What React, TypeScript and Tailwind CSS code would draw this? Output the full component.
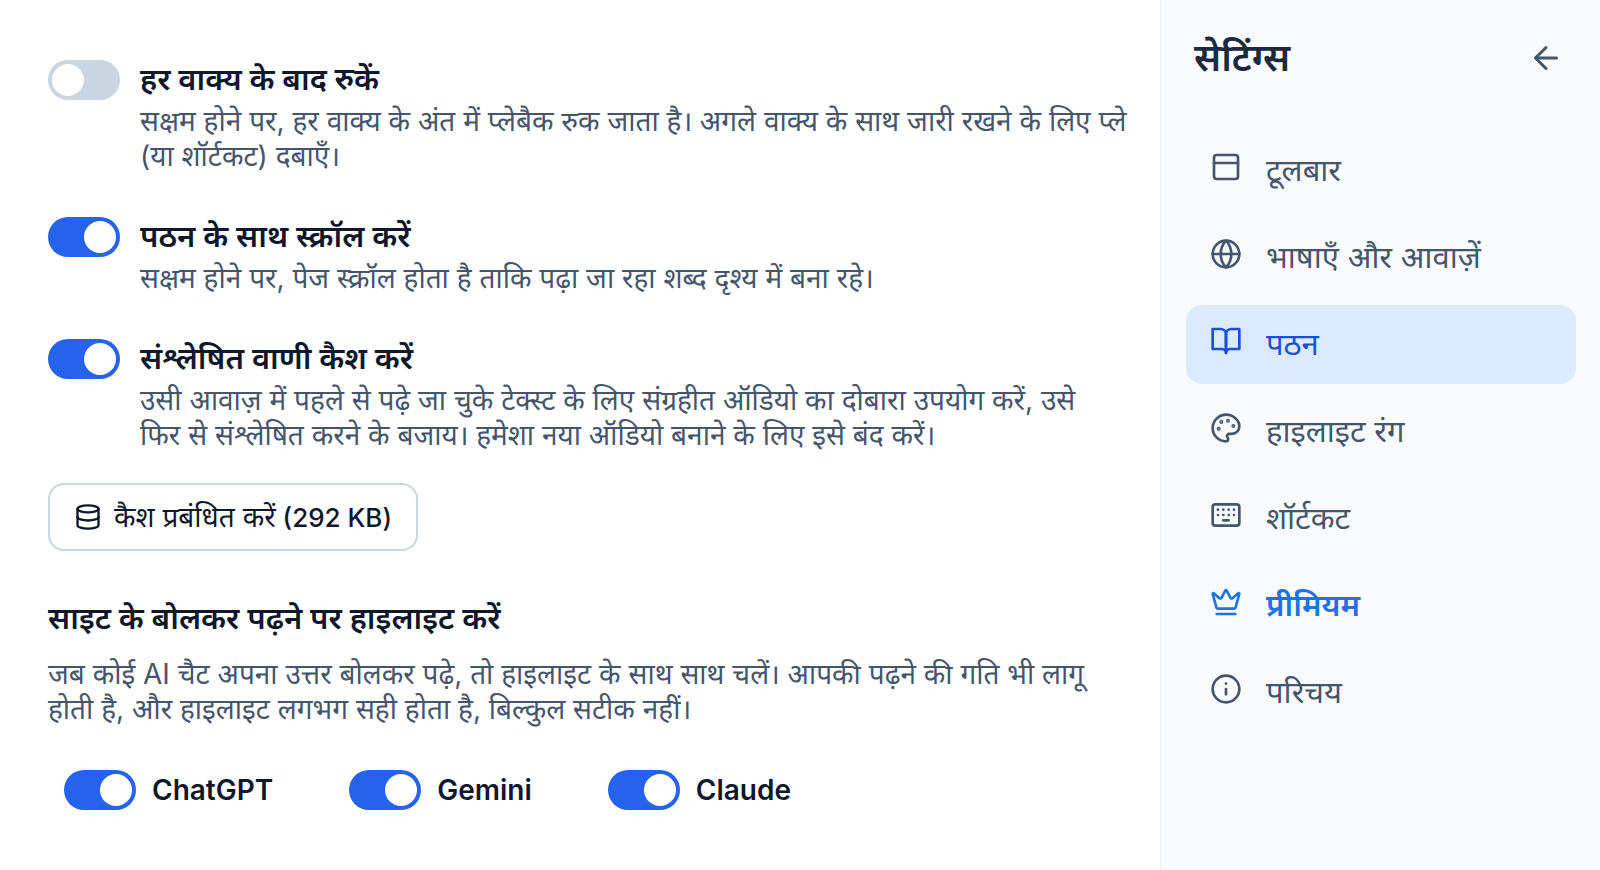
import { useState } from "react";
import type { ReactNode } from "react";
import { ArrowLeft, Crown, Database, Globe, Info, PanelTop } from "lucide-react";

type IconProps = { className?: string };

const BookIcon = ({ className }: IconProps) => (
  <svg
    viewBox="0 0 24 24"
    fill="none"
    stroke="currentColor"
    strokeWidth={2}
    strokeLinecap="round"
    strokeLinejoin="round"
    className={className}
  >
    <path d="M2 3h6a4 4 0 0 1 4 4v14a3 3 0 0 0-3-3H2z" />
    <path d="M22 3h-6a4 4 0 0 0-4 4v14a3 3 0 0 1 3-3h7z" />
  </svg>
);

const PaletteIcon = ({ className }: IconProps) => (
  <svg
    viewBox="0 0 24 24"
    fill="none"
    stroke="currentColor"
    strokeWidth={2}
    strokeLinecap="round"
    strokeLinejoin="round"
    className={className}
  >
    <circle cx="13.5" cy="6.5" r=".5" fill="currentColor" />
    <circle cx="17.5" cy="10.5" r=".5" fill="currentColor" />
    <circle cx="8.5" cy="7.5" r=".5" fill="currentColor" />
    <circle cx="6.5" cy="12.5" r=".5" fill="currentColor" />
    <path d="M12 2C6.5 2 2 6.5 2 12s4.5 10 10 10c.926 0 1.648-.746 1.648-1.688 0-.437-.18-.835-.437-1.125-.29-.289-.438-.652-.438-1.125a1.64 1.64 0 0 1 1.668-1.668h1.996c3.051 0 5.555-2.503 5.555-5.554C21.965 6.012 17.461 2 12 2z" />
  </svg>
);

const KeyboardIcon = ({ className }: IconProps) => (
  <svg
    viewBox="0 0 24 24"
    fill="none"
    stroke="currentColor"
    strokeWidth={2}
    strokeLinecap="round"
    strokeLinejoin="round"
    className={className}
  >
    <rect x="2" y="4" width="20" height="16" rx="2" />
    <path d="M6 8h.01M10 8h.01M14 8h.01M18 8h.01M6 12h.01M10 12h.01M14 12h.01M18 12h.01M10 16h4" />
  </svg>
);

const navItems = [
  { id: "toolbar", label: "टूलबार", icon: PanelTop },
  { id: "voices", label: "भाषाएँ और आवाज़ें", icon: Globe },
  { id: "reading", label: "पठन", icon: BookIcon },
  { id: "colors", label: "हाइलाइट रंग", icon: PaletteIcon },
  { id: "shortcuts", label: "शॉर्टकट", icon: KeyboardIcon },
  { id: "premium", label: "प्रीमियम", icon: Crown },
  { id: "about", label: "परिचय", icon: Info },
];

const Switch = ({ id, on = true }: { id: string; on?: boolean }) => {
  const [checked, setChecked] = useState(on);
  return (
    <span className="relative inline-flex h-10 w-18 shrink-0">
      <input
        id={id}
        type="checkbox"
        role="switch"
        checked={checked}
        onChange={(e) => setChecked(e.target.checked)}
        className="peer h-10 w-18 appearance-none rounded-full bg-slate-300 checked:bg-[#2563eb]"
      />
      <span className="pointer-events-none absolute left-1 top-1 size-8 rounded-full bg-white peer-checked:left-9" />
    </span>
  );
};

const Setting = ({
  id,
  title,
  on,
  children,
}: {
  id: string;
  title: string;
  on?: boolean;
  children: ReactNode;
}) => (
  <div className="flex items-start gap-5">
    <Switch id={id} on={on} />
    <div className="min-w-0 flex-1">
      <label htmlFor={id} className="block text-[31px] leading-[38px] font-semibold text-slate-900">
        {title}
      </label>
      <p className="mt-1.5 text-[28px] leading-[35px] text-slate-600">{children}</p>
    </div>
  </div>
);

const App = () => {
  return (
    <div className="flex min-h-screen bg-white font-[Inter,'Noto_Sans',sans-serif]">
      {/* reading settings */}
      <main className="min-w-0 flex-1 pt-15 pr-8 pb-12 pl-12">
        <div className="flex flex-col gap-[43px]">
          <Setting id="pause" title="हर वाक्य के बाद रुकें" on={false}>
            सक्षम होने पर, हर वाक्य के अंत में प्लेबैक रुक जाता है। अगले वाक्य के साथ जारी रखने के लिए प्ले
            <br />
            (या शॉर्टकट) दबाएँ।
          </Setting>
          <Setting id="scroll" title="पठन के साथ स्क्रॉल करें">
            सक्षम होने पर, पेज स्क्रॉल होता है ताकि पढ़ा जा रहा शब्द दृश्य में बना रहे।
          </Setting>
          <Setting id="cache" title="संश्लेषित वाणी कैश करें">
            उसी आवाज़ में पहले से पढ़े जा चुके टेक्स्ट के लिए संग्रहीत ऑडियो का दोबारा उपयोग करें, उसे
            <br />
            फिर से संश्लेषित करने के बजाय। हमेशा नया ऑडियो बनाने के लिए इसे बंद करें।
          </Setting>
        </div>

        <button
          type="button"
          className="mt-[30px] flex h-17 items-center gap-3 rounded-2xl border-2 border-slate-300 px-6 text-[26px] font-medium text-slate-900"
        >
          <Database className="size-7" />
          <span>
            <span className="text-[28px] font-normal">कैश प्रबंधित करें</span> (292 KB)
          </span>
        </button>

        <h2 className="mt-12 text-[31px] leading-[38px] font-semibold text-slate-900">
          साइट के बोलकर पढ़ने पर हाइलाइट करें
        </h2>
        <p className="mt-5 text-[28px] leading-[35px] text-slate-600">
          जब कोई AI चैट अपना उत्तर बोलकर पढ़े, तो हाइलाइट के साथ साथ चलें। आपकी पढ़ने की गति भी लागू
          होती है, और हाइलाइट लगभग सही होता है, बिल्कुल सटीक नहीं।
        </p>

        <div className="mt-[43px] flex gap-19 px-4">
          {["ChatGPT", "Gemini", "Claude"].map((name) => (
            <div key={name} className="flex items-center gap-4">
              <Switch id={name} />
              <label htmlFor={name} className="text-[28px] leading-10 font-semibold text-slate-900">
                {name}
              </label>
            </div>
          ))}
        </div>
      </main>

      {/* sidebar */}
      <aside className="w-110 shrink-0 border-l-2 border-slate-100 bg-slate-50 px-6 pt-8">
        <div className="flex items-center justify-between pr-3 pl-2">
          <h1 className="text-[38px] leading-[51px] font-semibold text-slate-800">सेटिंग्स</h1>
          <button type="button" aria-label="वापस" className="text-slate-600">
            <ArrowLeft className="size-9" />
          </button>
        </div>

        <nav className="mt-12 flex flex-col gap-2">
          {navItems.map(({ id, label, icon: Icon }) => (
            <a
              key={id}
              href={`#${id}`}
              className={`flex h-[79px] items-center gap-6 rounded-2xl px-6 text-[31px] ${
                id === "reading"
                  ? "bg-blue-100 text-[#1d4ed8]"
                  : id === "premium"
                    ? "font-semibold text-[#1a73e8]"
                    : "text-slate-600"
              }`}
            >
              <Icon className="mb-2 size-8" />
              {label}
            </a>
          ))}
        </nav>
      </aside>
    </div>
  );
};

export default App;
